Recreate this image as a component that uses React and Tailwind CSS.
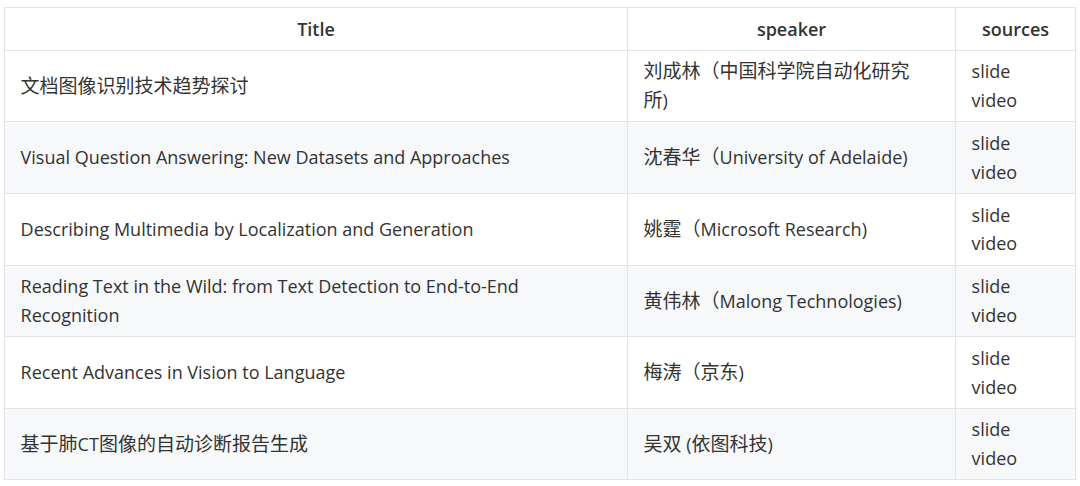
const rows = [
  { title: '文档图像识别技术趋势探讨', speaker: ['刘成林（中国科学院自动化研究', '所)'] },
  { title: 'Visual Question Answering: New Datasets and Approaches', speaker: ['沈春华（University of Adelaide)'] },
  { title: 'Describing Multimedia by Localization and Generation', speaker: ['姚霆（Microsoft Research)'] },
  { title: 'Reading Text in the Wild: from Text Detection to End-to-End Recognition', speaker: ['黄伟林（Malong Technologies)'] },
  { title: 'Recent Advances in Vision to Language', speaker: ['梅涛（京东)'] },
  { title: '基于肺CT图像的自动诊断报告生成', speaker: ['吴双 (依图科技)'] },
]

// CJK glyphs sit a touch larger than the latin text in the shot
const Mixed = ({ text }) =>
  text.split(/([\u3000-\u9fff\uff00-\uffef]+)/).map((part, i) =>
    i % 2 === 1 ? <span key={i} className="text-[19px]">{part}</span> : part
  )

const cell = 'border border-[#e1e4e8] px-[15.6px] py-[6.6px]'

const App = () => {
  return (
    <div className="w-[1080px] h-[486px] bg-white pt-[7px] pl-[4px]" style={{ fontFamily: '"Open Sans", "Noto Sans CJK SC", sans-serif' }}>
      <table className="border-collapse table-fixed w-[1071px] text-[18px] leading-[28.7px] text-[#333]">
        <colgroup>
          <col className="w-[623px]" />
          <col className="w-[328px]" />
          <col className="w-[120px]" />
        </colgroup>
        <thead>
          <tr>
            <th className={cell + ' font-semibold text-center'}>Title</th>
            <th className={cell + ' font-semibold text-center'}>speaker</th>
            <th className={cell + ' font-semibold text-center'}>sources</th>
          </tr>
        </thead>
        <tbody>
          {rows.map((r, i) => (
            <tr key={i} className={i % 2 === 1 ? 'bg-[#f6f8fa]' : 'bg-white'}>
              <td className={cell + ' align-middle'}><Mixed text={r.title} /></td>
              <td className={cell + ' align-middle'}>
                {r.speaker.map((line, j) => (
                  <div key={j}><Mixed text={line} /></div>
                ))}
              </td>
              <td className={cell + ' align-middle'}>
                <div>slide</div>
                <div>video</div>
              </td>
            </tr>
          ))}
        </tbody>
      </table>
    </div>
  )
}

export default App
